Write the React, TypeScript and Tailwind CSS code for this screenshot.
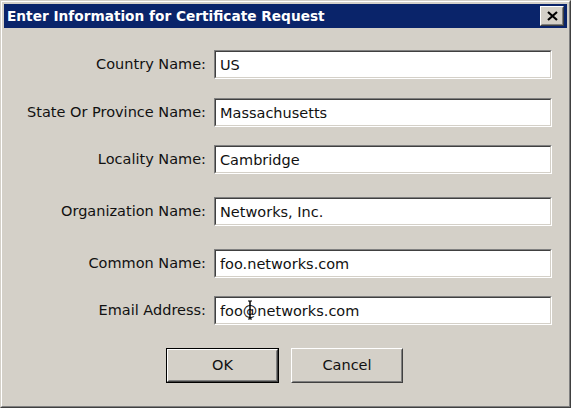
import { useState } from "react";

type Field = {
  id: string;
  label: string;
  value: string;
  gap: string;
};

const fields: Field[] = [
  { id: "country", label: "Country Name:", value: "US", gap: "mt-[22px]" },
  { id: "state", label: "State Or Province Name:", value: "Massachusetts", gap: "mt-[19px]" },
  { id: "locality", label: "Locality Name:", value: "Cambridge", gap: "mt-[18px]" },
  { id: "org", label: "Organization Name:", value: "Networks, Inc.", gap: "mt-[23px]" },
  { id: "common", label: "Common Name:", value: "foo.networks.com", gap: "mt-[23px]" },
  { id: "email", label: "Email Address:", value: "foo@networks.com", gap: "mt-[18px]" },
];

const font = "font-['DejaVu_Sans',Tahoma,sans-serif]";

const CloseButton = () => (
  <button className="w-[24px] h-[20px] border border-t-white border-l-white border-r-[#404040] border-b-[#404040]">
    <span className="flex h-full w-full items-center justify-center border border-t-[#d4d0c8] border-l-[#d4d0c8] border-r-[#808080] border-b-[#808080] bg-[#d4d0c8]">
      <svg width="11" height="10" viewBox="0 0 11 10">
        <path d="M1 1 L10 9 M10 1 L1 9" stroke="#000" strokeWidth="2.2" />
      </svg>
    </span>
  </button>
);

// mouse I-beam resting over the email field
const TextBeam = () => (
  <svg
    width="8"
    height="20"
    viewBox="0 0 8 20"
    className="absolute left-[32px] top-[3px] pointer-events-none"
  >
    <path d="M1 1 H3 V19 H1 M3 1 V19 M5 1 H3 M5 19 H3" stroke="#000" strokeWidth="1" fill="none" />
  </svg>
);

const Row = ({ field, value, onChange }: { field: Field; value: string; onChange: (v: string) => void }) => (
  <div className={`flex items-center ${field.gap}`}>
    <label htmlFor={field.id} className="w-[202px] text-right text-[14.5px] text-[#111]">
      {field.label}
    </label>
    <div className="relative ml-[8px] w-[338px] h-[29px] border border-t-[#808080] border-l-[#808080] border-r-white border-b-white">
      <div className="h-full w-full border border-t-[#404040] border-l-[#404040] border-r-[#d4d0c8] border-b-[#d4d0c8] bg-white">
        <input
          id={field.id}
          value={value}
          onChange={(e) => onChange(e.target.value)}
          className={`h-full w-full bg-transparent px-[4px] text-[14.5px] text-[#111] outline-none ${font}`}
        />
      </div>
      {field.id === "email" && <TextBeam />}
    </div>
  </div>
);

export default function App() {
  const [values, setValues] = useState<Record<string, string>>(
    Object.fromEntries(fields.map((f) => [f.id, f.value])),
  );

  return (
    <div className={`w-[574px] h-[410px] bg-white ${font}`}>
      <div className="w-[571px] h-[408px] border border-t-[#d4d0c8] border-l-[#d4d0c8] border-r-[#404040] border-b-[#404040]">
        <div className="flex h-full flex-col border border-t-white border-l-white border-r-[#808080] border-b-[#808080] bg-[#d4d0c8] p-[2px]">
          {/* title bar */}
          <div className="flex h-[24px] items-center justify-between bg-[#0a246a] pl-[3px] pr-[3px]">
            <span className="text-[13.7px] font-bold text-white">Enter Information for Certificate Request</span>
            <CloseButton />
          </div>

          <div className="flex flex-col">
            {fields.map((f) => (
              <Row
                key={f.id}
                field={f}
                value={values[f.id]}
                onChange={(v) => setValues({ ...values, [f.id]: v })}
              />
            ))}
          </div>

          <div className="mt-[23px] flex justify-center gap-[12px] pr-[2px]">
            <button className="w-[113px] h-[35px] border border-black">
              <span className="block h-full w-full border border-t-white border-l-white border-r-[#404040] border-b-[#404040]">
                <span className="flex h-full w-full items-center justify-center border border-t-[#d4d0c8] border-l-[#d4d0c8] border-r-[#808080] border-b-[#808080] bg-[#d4d0c8] text-[14.5px] text-[#111]">
                  OK
                </span>
              </span>
            </button>
            <button className="w-[112px] h-[35px] border border-t-white border-l-white border-r-[#404040] border-b-[#404040]">
              <span className="flex h-full w-full items-center justify-center border border-t-[#d4d0c8] border-l-[#d4d0c8] border-r-[#808080] border-b-[#808080] bg-[#d4d0c8] text-[14.5px] text-[#111]">
                Cancel
              </span>
            </button>
          </div>
        </div>
      </div>
    </div>
  );
}
